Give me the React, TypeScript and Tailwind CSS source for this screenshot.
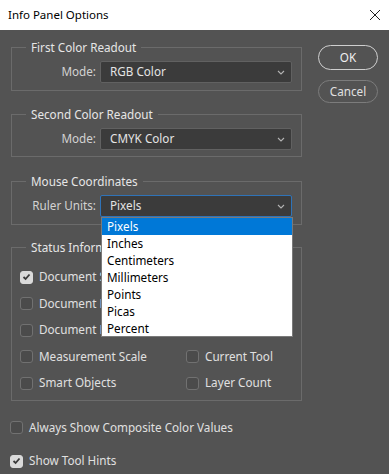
import React from 'react';

const font = { fontFamily: '"Noto Sans", "Open Sans", sans-serif' };

const Chevron: React.FC = () => (
  <svg width="8" height="5" viewBox="0 0 8 5" className="shrink-0">
    <polyline points="1,1 4,4 7,1" fill="none" stroke="#b4b4b4" strokeWidth="1.1" />
  </svg>
);

const Select: React.FC<{ value: string; focused?: boolean }> = ({ value, focused }) => (
  <div
    className={`flex-1 h-[22px] flex items-center justify-between pl-[9px] pr-[6px] rounded-[2px] bg-[#3b3b3b] border ${
      focused ? 'border-[#2f73b8]' : 'border-[#616161]'
    }`}
  >
    <span className="text-[#e4e4e4]">{value}</span>
    <Chevron />
  </div>
);

const Group: React.FC<{ title: string; className?: string; legendClass?: string; children: React.ReactNode }> = ({
  title,
  className,
  legendClass,
  children,
}) => (
  <fieldset className={`border border-[#6b6b6b] ${className ?? ''}`}>
    <legend className={`px-[5px] h-[18px] leading-[18px] text-[#e6e6e6] ${legendClass ?? 'ml-[5px]'}`}>{title}</legend>
    {children}
  </fieldset>
);

const SelectRow: React.FC<{ label: string; value: string; focused?: boolean }> = ({ label, value, focused }) => (
  <div className="flex items-center">
    <span className="w-[75px] text-right text-[#d2d2d2] whitespace-nowrap">{label}</span>
    <div className="ml-[4px] flex-1 flex">
      <Select value={value} focused={focused} />
    </div>
  </div>
);

const Checkbox: React.FC<{ checked?: boolean }> = ({ checked }) => (
  <span
    className={`w-[13px] h-[13px] rounded-[3px] flex items-center justify-center shrink-0 border ${
      checked ? 'bg-[#dadada] border-[#dadada]' : 'bg-[#4b4b4b] border-[#717171]'
    }`}
  >
    {checked && (
      <svg width="9" height="8" viewBox="0 0 9 8">
        <polyline points="1.5,4 3.6,6 7.5,1.5" fill="none" stroke="#3a3a3a" strokeWidth="1.8" />
      </svg>
    )}
  </span>
);

const Check: React.FC<{ label: string; checked?: boolean }> = ({ label, checked }) => (
  <label className="flex items-center h-[26.5px] gap-[6px] text-[#e0e0e0] whitespace-nowrap">
    <Checkbox checked={checked} />
    <span>{label}</span>
  </label>
);

const units = ['Pixels', 'Inches', 'Centimeters', 'Millimeters', 'Points', 'Picas', 'Percent'];

export default function App() {
  return (
    <div className="w-[389px] h-[474px] overflow-hidden bg-[#535353] text-[11.7px]" style={font}>
      <div className="h-[30px] bg-white flex items-center justify-between pl-[8px] pr-[8px]">
        <span className="text-black text-[11.5px]">Info Panel Options</span>
        <svg width="12" height="12" viewBox="0 0 12 12">
          <path d="M1 1 L11 11 M11 1 L1 11" stroke="#222" strokeWidth="1" />
        </svg>
      </div>

      <div className="flex pl-[11px]">
        <div className="w-[291px] relative">
          <Group title="First Color Readout" className="mt-[8px] px-[9px] pt-[5px] pb-[7px]">
            <SelectRow label="Mode:" value="RGB Color" />
          </Group>
          <Group title="Second Color Readout" className="mt-[14px] px-[9px] pt-[5px] pb-[6px]">
            <SelectRow label="Mode:" value="CMYK Color" />
          </Group>
          <Group title="Mouse Coordinates" className="mt-[15px] px-[9px] pt-[5px] pb-[7px]">
            <SelectRow label="Ruler Units:" value="Pixels" focused />
          </Group>
          <Group title="Status Information" legendClass="ml-[6px]" className="mt-[13px] pl-[8px] pt-[8px] pb-[3px]">
            <div className="grid grid-cols-[166px_1fr]">
              <Check label="Document Sizes" checked />
              <Check label="Scratch Sizes" />
              <Check label="Document Profile" />
              <Check label="Efficiency" />
              <Check label="Document Dimensions" />
              <Check label="Timing" />
              <Check label="Measurement Scale" />
              <Check label="Current Tool" />
              <Check label="Smart Objects" />
              <Check label="Layer Count" />
            </div>
          </Group>

          <div className="absolute left-[90px] top-[187px] w-[192px] h-[120px] bg-white border border-[#7a7a7a] text-black">
            {units.map((u, i) => (
              <div
                key={u}
                className={`h-[17px] leading-[17px] pl-[5px] ${i === 0 ? 'bg-[#0078d7] text-white' : ''}`}
              >
                {u}
              </div>
            ))}
          </div>
        </div>

        <div className="ml-[16px] mt-[15px] flex flex-col gap-[10px] w-[60px]">
          <button className="h-[25px] rounded-full border-[1.5px] border-[#cfcfcf] text-[#f0f0f0]">OK</button>
          <button className="h-[23px] rounded-full border border-[#7c7c7c] text-[#e0e0e0]">Cancel</button>
        </div>
      </div>

      <div className="pl-[10px] mt-[14px] flex flex-col gap-[7px]">
        <Check label="Always Show Composite Color Values" />
        <Check label="Show Tool Hints" checked />
      </div>
    </div>
  );
}
